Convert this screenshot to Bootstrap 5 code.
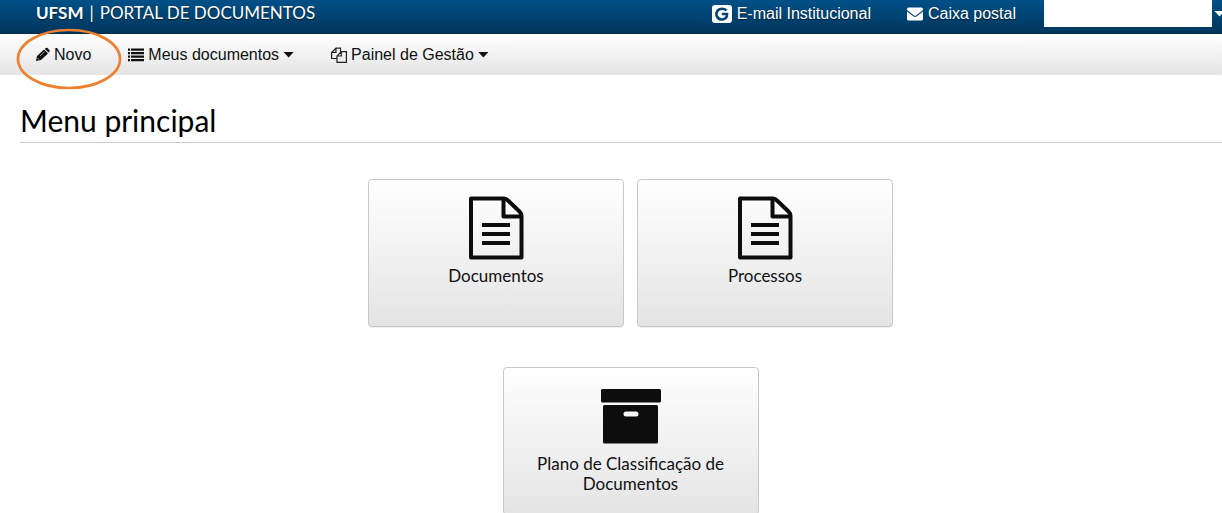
<!DOCTYPE html>
<html lang="pt-BR">
<head>
<meta charset="utf-8">
<meta name="viewport" content="width=device-width, initial-scale=1">
<title>UFSM | Portal de Documentos</title>
<link href="https://cdn.jsdelivr.net/npm/bootstrap@5.3.0/dist/css/bootstrap.min.css" rel="stylesheet">
<style>
  body { font-family: "Liberation Sans", Arial, sans-serif; font-size: 16px; line-height: 20px; color: #111; background: #fff; }
  a { color: inherit; text-decoration: none; }
  .topbar { height: 34px; background: linear-gradient(#005088, #00365c); border-bottom: 1px solid #002a48; color: #fff; text-shadow: 0 1px 1px #001c30; padding-left: 36px; }
  .brand { font-family: Lato, sans-serif; font-size: 17px; line-height: 25px; gap: 6px; }
  .topbar-links { gap: 36px; padding-top: 4px; }
  .toplink { gap: 5px; }
  .account { gap: 2px; margin-left: 28px; margin-right: -3px; }
  .account-name { width: 168px; height: 27px; background: #fff; }
  .menubar { height: 41px; background: linear-gradient(#fff, #e4e4e4); padding-left: 35px; gap: 37px; }
  .menubar button { gap: 4px; line-height: 20px; color: #111; }
  .caret { width: 11px; height: 6px; background: currentColor; clip-path: polygon(0 0, 100% 0, 50% 100%); }
  .ring { left: -20px; top: -17px; width: 109px; height: 62px; pointer-events: none; }
  .page-title { font-family: Lato, sans-serif; font-weight: 400; font-size: 30px; line-height: 38px; padding-bottom: 3px; border-bottom: 1px solid #ccc; color: #000; }
  .content { padding: 26px 0 0 20px; }
  .tiles { padding: 36px 0 0 19px; column-gap: 13px; row-gap: 40px; }
  .tile { width: 256px; height: 148px; border: 1px solid #c8c8c8; border-radius: 4px; background: linear-gradient(#fff, #e4e4e4); font-family: Lato, sans-serif; font-size: 17px; padding: 14px 24px; box-shadow: 0 1px 1px #eee; }
  .tile svg { margin-bottom: 4px; }
</style>
</head>
<body>
<div class="vh-100 overflow-hidden">
  <header class="topbar d-flex align-items-start overflow-hidden">
    <a class="brand d-flex text-nowrap" href="#"><b>UFSM</b> <span>|</span> <span>PORTAL DE DOCUMENTOS</span></a>
    <nav class="topbar-links d-flex ms-auto text-nowrap" aria-label="Atalhos">
      <a class="toplink d-flex align-items-center" href="#">
        <svg width="20" height="18" viewBox="0 0 20 18" aria-hidden="true"><rect width="20" height="18" rx="3" fill="#fff"/><path d="M14.500 5.600C12.800 3.200 8 2.900 5.500 5.700C3 9 5 14.500 10 14.500C13.500 14.500 15.200 12 15 9H9.800" fill="none" stroke="#004575" stroke-width="2.600"/></svg>
        <span>E-mail Institucional</span></a>
      <a class="toplink d-flex align-items-center" href="#">
        <svg width="16" height="14" viewBox="0 0 16 14" aria-hidden="true"><path d="M1.500 .5h13a1.500 1.500 0 0 1 1.500 1.500v1L9.300 8.200q-1.300 1-2.600 0L0 3V2A1.500 1.500 0 0 1 1.500 .5zM0 4.500l6.200 4.800q1.800 1.200 3.600 0L16 4.500v7.500a1.500 1.500 0 0 1-1.500 1.500h-13A1.500 1.500 0 0 1 0 12z" fill="#fff"/></svg>
        <span>Caixa postal</span></a>
    </nav>
    <button type="button" class="account btn p-0 border-0 rounded-0 d-flex align-items-center text-white" aria-label="Conta do usuário"><span class="account-name"></span><span class="caret"></span></button>
  </header>

  <nav class="menubar d-flex align-items-center text-nowrap" aria-label="Menu">
    <div class="position-relative">
      <button type="button" class="btn p-0 border-0 d-flex align-items-center">
        <svg width="15" height="15" viewBox="0 0 15 15" aria-hidden="true"><path d="M1 14l1-5 7-6.500 4 4-7 6.500zM9.800 1.900l.9-.9q.9-.7 1.800 0l1.900 1.900q.7.900 0 1.800l-.9.900z" fill="#111"/><path d="M2.500 11l1.500 1.500M5 9l4.500-4.300" stroke="#ddd" stroke-width=".7"/></svg>
        <span>Novo</span></button>
      <svg class="ring position-absolute" viewBox="0 0 109 62" aria-hidden="true"><ellipse cx="54" cy="31" rx="51" ry="29" fill="none" stroke="#ed8130" stroke-width="2.700"/></svg>
    </div>
    <button type="button" class="btn p-0 border-0 d-flex align-items-center">
      <svg width="16" height="14" viewBox="0 0 16 14" aria-hidden="true"><path d="M0 .5h2v2.300H0zM0 4h2v2.300H0zM0 7.500h2v2.300H0zM0 11h2v2.300H0zM3 .5h13v2.300H3zM3 4h13v2.300H3zM3 7.500h13v2.300H3zM3 11h13v2.300H3z" fill="#111"/></svg>
      <span>Meus documentos</span><span class="caret"></span></button>
    <button type="button" class="btn p-0 border-0 d-flex align-items-center">
      <svg width="16" height="16" viewBox="0 0 16 16" aria-hidden="true"><path d="M6 11.500H.6V5.500L5 1.100H9.500V4.500M5 1.100V5.500H.6M10.300 4.600H15.400V15.400H6V9zM10.300 4.600V9H6" fill="none" stroke="#222" stroke-width="1.200"/></svg>
      <span>Painel de Gestão</span><span class="caret"></span></button>
  </nav>

  <main class="content">
    <h1 class="page-title m-0">Menu principal</h1>
    <div class="tiles d-flex flex-wrap justify-content-center">
      <a class="tile d-flex flex-column align-items-center text-center" href="#">
        <svg width="56" height="68" viewBox="0 0 56 68" aria-hidden="true"><g fill="none" stroke="#0d0d0d" stroke-width="4" stroke-linejoin="round"><path d="M3 4.500H36Q38 4.500 40 6.500L51.500 17.500Q53.500 19.500 53.500 22V63.500H3z"/><path d="M35.500 4.500V22.500H53.500"/></g><path d="M14 29h28v4H14zM14 38h28v4H14zM14 47h28v4H14z" fill="#0d0d0d"/></svg>
        <span>Documentos</span></a>
      <a class="tile d-flex flex-column align-items-center text-center" href="#">
        <svg width="56" height="68" viewBox="0 0 56 68" aria-hidden="true"><g fill="none" stroke="#0d0d0d" stroke-width="4" stroke-linejoin="round"><path d="M3 4.500H36Q38 4.500 40 6.500L51.500 17.500Q53.500 19.500 53.500 22V63.500H3z"/><path d="M35.500 4.500V22.500H53.500"/></g><path d="M14 29h28v4H14zM14 38h28v4H14zM14 47h28v4H14z" fill="#0d0d0d"/></svg>
        <span>Processos</span></a>
      <div class="w-100 d-flex justify-content-center">
        <a class="tile d-flex flex-column align-items-center text-center" href="#">
          <svg width="60" height="68" viewBox="0 0 60 68" aria-hidden="true"><path fill-rule="evenodd" fill="#0d0d0d" d="M1.500 7h57a1.500 1.500 0 0 1 1.500 1.500V19a1.500 1.500 0 0 1-1.500 1.500h-57A1.500 1.500 0 0 1 0 19V8.500A1.500 1.500 0 0 1 1.500 7zM3.500 23h52a1.500 1.500 0 0 1 1.500 1.500V60a1.500 1.500 0 0 1-1.500 1.500h-52A1.500 1.500 0 0 1 2 60V24.500A1.500 1.500 0 0 1 3.500 23zM25 29.500a2.500 2.500 0 0 0 0 5h10a2.500 2.500 0 0 0 0-5z"/></svg>
          <span>Plano de Classificação de Documentos</span></a>
      </div>
    </div>
  </main>
</div>
<script src="https://cdn.jsdelivr.net/npm/bootstrap@5.3.0/dist/js/bootstrap.bundle.min.js"></script>
</body>
</html>
